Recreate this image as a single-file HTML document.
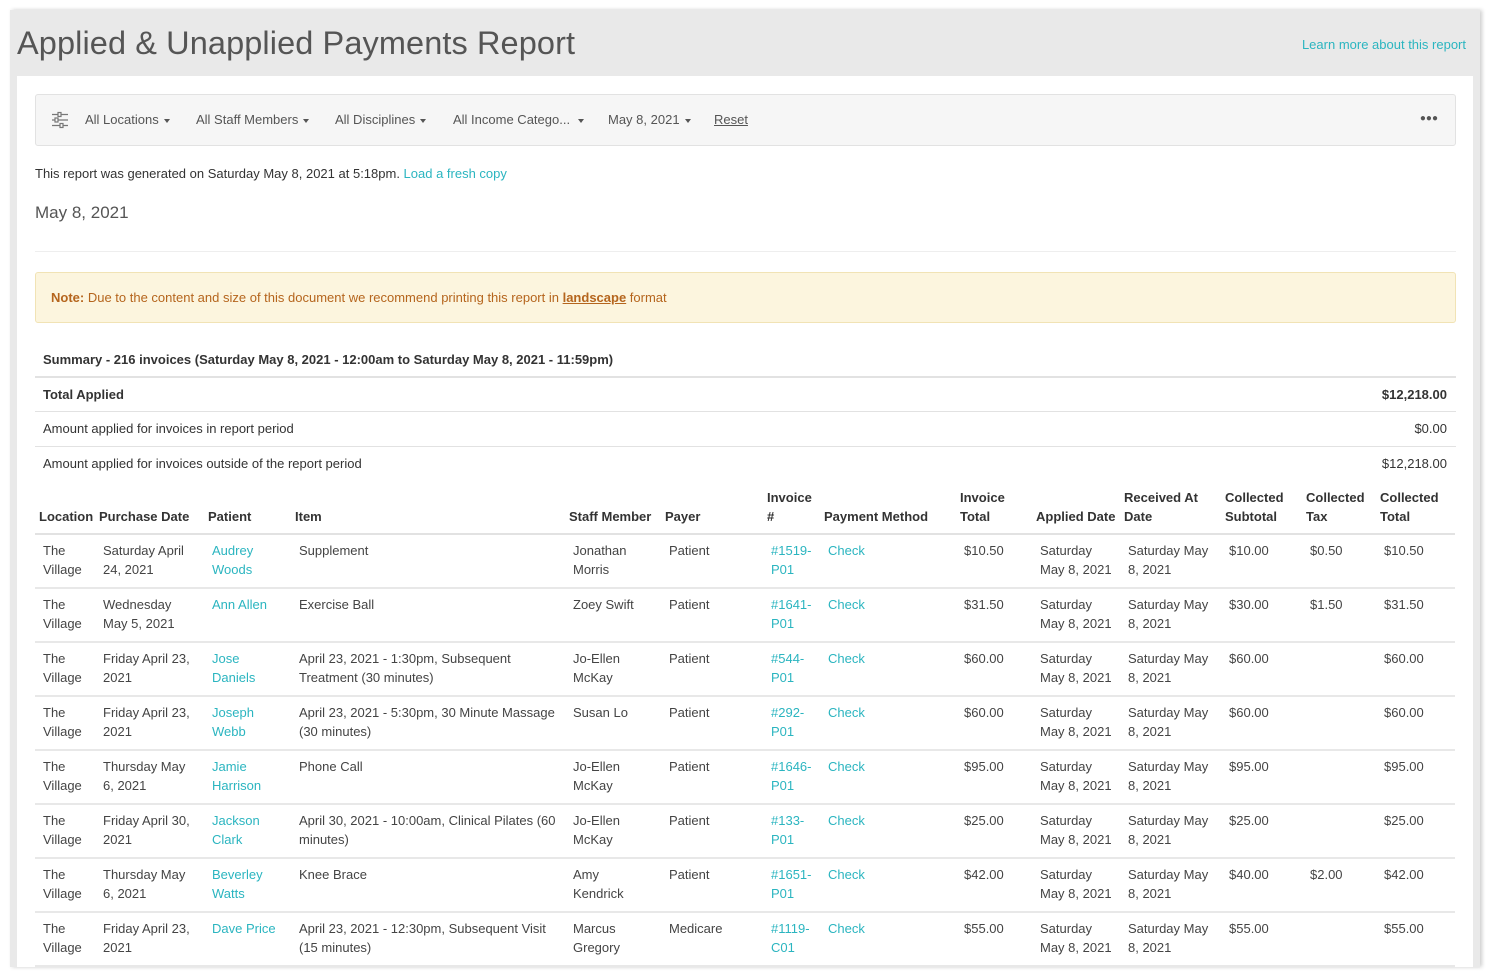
<!DOCTYPE html>
<html><head><meta charset="utf-8"><style>
*{box-sizing:border-box;margin:0;padding:0}
body{width:1491px;height:977px;background:#fff;font-family:"Liberation Sans",Arial,sans-serif;color:#333;font-size:13px;overflow:hidden;position:relative}
.card{position:absolute;left:10px;top:10px;width:1470px;height:957px;background:#e9e9e9;box-shadow:2px 0 4px rgba(0,0,0,.2)}
h1{position:absolute;left:17px;top:25px;font-weight:300;font-size:32.5px;color:#555;letter-spacing:.1px}
.learn{position:absolute;right:25px;top:37px;color:#2bb5c0;font-size:13px}
.content{position:absolute;left:17px;top:76px;width:1456px;height:891px;background:#fff;overflow:hidden}
.a{position:absolute}
.filter{left:35px;top:94px;width:1421px;height:52px;background:#f6f6f6;border:1px solid #e2e2e2;border-radius:3px}
.filter span{position:absolute;top:17px;color:#555;font-size:13px}
.car{display:inline-block;border-left:3.5px solid transparent;border-right:3.5px solid transparent;border-top:4px solid #555;vertical-align:middle;margin-left:5px}
.teal{color:#2bb5c0}
.note{left:35px;top:272px;width:1421px;height:51px;background:#fcf5de;border:1px solid #f1e3b5;border-radius:3px;color:#b5651d;padding:17px 15px;font-size:13px}
.hl{left:35px;width:1421px;height:1px;background:#e2e2e2}
table{position:absolute;left:18px;top:408px;width:1420px;border-collapse:collapse;table-layout:fixed}
th{text-align:left;vertical-align:bottom;font-weight:bold;padding:4px 4px 7px;line-height:19px;font-size:13px;color:#333;border-bottom:2px solid #e2e2e2;white-space:nowrap}
td{vertical-align:top;padding:6px 4px 8px 8px;line-height:19px;height:51px;border-bottom:2px solid #e8e8e8;white-space:nowrap;color:#444}
td.l{color:#2bb5c0}
</style></head><body>
<div class="card"></div>
<h1>Applied &amp; Unapplied Payments Report</h1>
<div class="learn">Learn more about this report</div>
<div class="content">
<table>
<colgroup><col style="width:60px"><col style="width:109px"><col style="width:87px"><col style="width:274px"><col style="width:96px"><col style="width:102px"><col style="width:57px"><col style="width:136px"><col style="width:76px"><col style="width:88px"><col style="width:101px"><col style="width:81px"><col style="width:74px"><col style="width:79px"></colgroup>
<tr><th>Location</th><th>Purchase Date</th><th>Patient</th><th>Item</th><th>Staff Member</th><th>Payer</th><th>Invoice<br>#</th><th>Payment Method</th><th>Invoice<br>Total</th><th>Applied Date</th><th>Received At<br>Date</th><th>Collected<br>Subtotal</th><th>Collected<br>Tax</th><th>Collected<br>Total</th></tr>
<tr><td>The<br>Village</td><td>Saturday April<br>24, 2021</td><td class="l">Audrey<br>Woods</td><td>Supplement</td><td>Jonathan<br>Morris</td><td>Patient</td><td class="l">#1519-<br>P01</td><td class="l">Check</td><td>$10.50</td><td>Saturday<br>May 8, 2021</td><td>Saturday May<br>8, 2021</td><td>$10.00</td><td>$0.50</td><td>$10.50</td></tr>
<tr><td>The<br>Village</td><td>Wednesday<br>May 5, 2021</td><td class="l">Ann Allen</td><td>Exercise Ball</td><td>Zoey Swift</td><td>Patient</td><td class="l">#1641-<br>P01</td><td class="l">Check</td><td>$31.50</td><td>Saturday<br>May 8, 2021</td><td>Saturday May<br>8, 2021</td><td>$30.00</td><td>$1.50</td><td>$31.50</td></tr>
<tr><td>The<br>Village</td><td>Friday April 23,<br>2021</td><td class="l">Jose<br>Daniels</td><td>April 23, 2021 - 1:30pm, Subsequent<br>Treatment (30 minutes)</td><td>Jo-Ellen<br>McKay</td><td>Patient</td><td class="l">#544-<br>P01</td><td class="l">Check</td><td>$60.00</td><td>Saturday<br>May 8, 2021</td><td>Saturday May<br>8, 2021</td><td>$60.00</td><td></td><td>$60.00</td></tr>
<tr><td>The<br>Village</td><td>Friday April 23,<br>2021</td><td class="l">Joseph<br>Webb</td><td>April 23, 2021 - 5:30pm, 30 Minute Massage<br>(30 minutes)</td><td>Susan Lo</td><td>Patient</td><td class="l">#292-<br>P01</td><td class="l">Check</td><td>$60.00</td><td>Saturday<br>May 8, 2021</td><td>Saturday May<br>8, 2021</td><td>$60.00</td><td></td><td>$60.00</td></tr>
<tr><td>The<br>Village</td><td>Thursday May<br>6, 2021</td><td class="l">Jamie<br>Harrison</td><td>Phone Call</td><td>Jo-Ellen<br>McKay</td><td>Patient</td><td class="l">#1646-<br>P01</td><td class="l">Check</td><td>$95.00</td><td>Saturday<br>May 8, 2021</td><td>Saturday May<br>8, 2021</td><td>$95.00</td><td></td><td>$95.00</td></tr>
<tr><td>The<br>Village</td><td>Friday April 30,<br>2021</td><td class="l">Jackson<br>Clark</td><td>April 30, 2021 - 10:00am, Clinical Pilates (60<br>minutes)</td><td>Jo-Ellen<br>McKay</td><td>Patient</td><td class="l">#133-<br>P01</td><td class="l">Check</td><td>$25.00</td><td>Saturday<br>May 8, 2021</td><td>Saturday May<br>8, 2021</td><td>$25.00</td><td></td><td>$25.00</td></tr>
<tr><td>The<br>Village</td><td>Thursday May<br>6, 2021</td><td class="l">Beverley<br>Watts</td><td>Knee Brace</td><td>Amy<br>Kendrick</td><td>Patient</td><td class="l">#1651-<br>P01</td><td class="l">Check</td><td>$42.00</td><td>Saturday<br>May 8, 2021</td><td>Saturday May<br>8, 2021</td><td>$40.00</td><td>$2.00</td><td>$42.00</td></tr>
<tr><td>The<br>Village</td><td>Friday April 23,<br>2021</td><td class="l">Dave Price</td><td>April 23, 2021 - 12:30pm, Subsequent Visit<br>(15 minutes)</td><td>Marcus<br>Gregory</td><td>Medicare</td><td class="l">#1119-<br>C01</td><td class="l">Check</td><td>$55.00</td><td>Saturday<br>May 8, 2021</td><td>Saturday May<br>8, 2021</td><td>$55.00</td><td></td><td>$55.00</td></tr>
</table>
</div>
<div class="a filter">
<svg style="position:absolute;left:15px;top:16px" width="18" height="18" viewBox="0 0 18 18" fill="none" stroke="#777" stroke-width="1.2"><path d="M1 3.5h16M1 9h16M1 14.5h16"/><rect x="7" y="1.5" width="3" height="4" fill="#f6f6f6"/><rect x="4" y="7" width="3" height="4" fill="#f6f6f6"/><rect x="9" y="12.5" width="3" height="4" fill="#f6f6f6"/></svg>
<span style="left:49px">All Locations<i class="car"></i></span>
<span style="left:160px">All Staff Members<i class="car"></i></span>
<span style="left:299px">All Disciplines<i class="car"></i></span>
<span style="left:417px">All Income Catego...<i class="car" style="margin-left:8px"></i></span>
<span style="left:572px">May 8, 2021<i class="car"></i></span>
<span style="left:678px;text-decoration:underline">Reset</span>
<span style="right:17px;top:18px;font-size:10px;letter-spacing:0px;color:#555">●●●</span>
</div>
<div class="a" style="left:35px;top:166px;color:#333">This report was generated on Saturday May 8, 2021 at 5:18pm. <span class="teal">Load a fresh copy</span></div>
<div class="a" style="left:35px;top:203px;font-size:17px;color:#555">May 8, 2021</div>
<div class="a hl" style="top:251px;background:#eee"></div>
<div class="a note"><b>Note:</b> Due to the content and size of this document we recommend printing this report in <b style="text-decoration:underline">landscape</b> format</div>
<div class="a" style="left:43px;top:352px;font-weight:bold">Summary - 216 invoices (Saturday May 8, 2021 - 12:00am to Saturday May 8, 2021 - 11:59pm)</div>
<div class="a hl" style="top:376px;height:2px"></div>
<div class="a" style="left:43px;top:387px;font-weight:bold">Total Applied</div>
<div class="a" style="right:44px;top:387px;font-weight:bold">$12,218.00</div>
<div class="a hl" style="top:411px"></div>
<div class="a" style="left:43px;top:421px">Amount applied for invoices in report period</div>
<div class="a" style="right:44px;top:421px">$0.00</div>
<div class="a hl" style="top:446px"></div>
<div class="a" style="left:43px;top:456px">Amount applied for invoices outside of the report period</div>
<div class="a" style="right:44px;top:456px">$12,218.00</div>
</body></html>
